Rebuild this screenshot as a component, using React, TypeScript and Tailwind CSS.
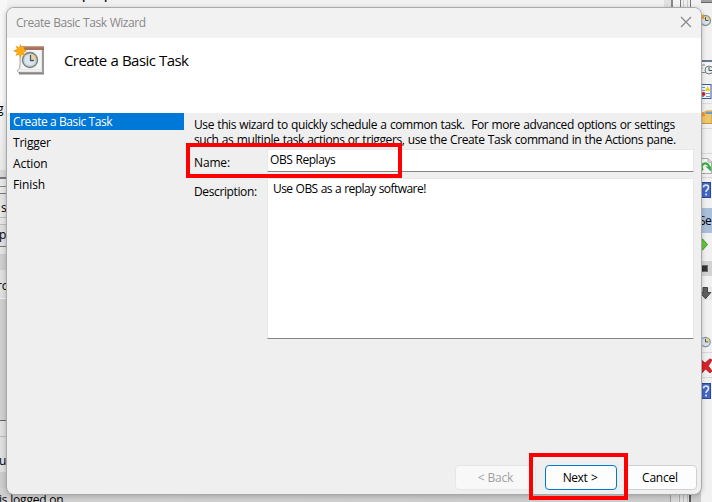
import type { ReactNode } from "react";

const UI = "font-['Open_Sans','Noto_Sans',sans-serif]";

function Slot({ h, children, className = "overflow-hidden" }: { h: number; children?: ReactNode; className?: string }) {
  return (
    <div className={`shrink-0 ${className}`} style={{ height: h }}>
      {children}
    </div>
  );
}

function Clock({ cx, cy, r }: { cx: number; cy: number; r: number }) {
  return (
    <g>
      <circle cx={cx} cy={cy} r={r} fill="#d5e4ee" stroke="#8c9499" strokeWidth="1.3" />
      <path d={`M${cx} ${cy}V${cy - r + 1}A${r - 1} ${r - 1} 0 0 1 ${cx + r - 1} ${cy}Z`} fill="#f2cf7c" />
      <path d={`M${cx} ${cy - r + 1.5}V${cy}H${cx + r - 2}`} fill="none" stroke="#4e5a66" strokeWidth="1" />
    </g>
  );
}

function Help() {
  return (
    <svg width="11" height="16" viewBox="0 0 11 16">
      <rect x="-4" y="0.5" width="13.5" height="15" fill="#4267c5" stroke="#2c4696" />
      <path d="M2.5 5.5Q2.5 3 5 3Q7.5 3 7.5 5.5Q7.5 7 6 8Q5 8.700 5 10M5 11.500V13.500" fill="none" stroke="#e6ecfb" strokeWidth="1.600" />
    </svg>
  );
}

function TaskIcon() {
  return (
    <svg width="32" height="32" viewBox="0 0 32 32">
      <path d="M6 27H31V30.500H6Z" fill="#858585" />
      <path d="M8 4H31V29H7Z" fill="#9a9a9a" />
      <path d="M7.500 4H29V27H4.500Q7 25 7 20Z" fill="#e6e6e6" />
      <path d="M9 6H28V25H8Z" fill="#f4f4f4" />
      <path d="M4.500 26.500H29V27.800H5.500Z" fill="#ffffff" />
      <path d="M8 2H31V6H8Z" fill="#a8705c" />
      <path d="M8 2H31V3.200H8Z" fill="#c79a84" />
      <path d="M4.200 26.800Q7 25 7 20V10M4.200 26.800L6 29" fill="none" stroke="#a4a4a4" strokeWidth=".9" />
      <circle cx="17" cy="16" r="7.400" fill="#dbe7ef" stroke="#7b8285" strokeWidth="1.600" />
      <path d="M17 16V10A6 6 0 0 1 23 16Z" fill="#f2d48d" />
      <circle cx="17" cy="16" r="6" fill="none" stroke="#b6c1c7" strokeWidth=".8" />
      <path d="M17.500 11V16.500H21" fill="none" stroke="#485c75" strokeWidth="1.300" />
      <path d="M7.500 0L8.800 3.500L12 1.500L10.900 5L14 7L10.900 8.500L12 12L8.800 10.500L7.500 14L6 10.500L2.500 12L4 8.500L0 7L4 5L2.500 1.500L6 3.500Z" fill="#e79b18" />
      <circle cx="7.500" cy="7" r="4.200" fill="#ffac14" />
    </svg>
  );
}

function LeftPane() {
  return (
    <div className="flex w-[7px] shrink-0 flex-col text-[12px] leading-[16px] tracking-[-0.2px] text-black">
      <Slot h={101} className="bg-[#f7f7f7]" />
      <Slot h={69} className="bg-linear-to-b from-[#f4f4f4] to-[#e8e8e8]"><span className="-ml-[3px]">g</span></Slot>
      <Slot h={7} className="bg-[#d7d7d7]" />
      <Slot h={2} className="bg-[#777]" />
      <Slot h={7} className="bg-[#e7e7e7]" />
      <Slot h={1} className="bg-[#858585]" />
      <Slot h={6} className="bg-[#e7e7e7]" />
      <Slot h={1} className="bg-[#777]" />
      <Slot h={6} className="bg-[#e2e2e2]" />
      <Slot h={17} className="bg-[#e5e5e5]"><span className="ml-px">s</span></Slot>
      <Slot h={1} className="bg-[#bdbdbd]" />
      <Slot h={6} className="bg-[#e5e5e5]" />
      <Slot h={1} className="bg-[#bdbdbd]" />
      <Slot h={2} className="bg-[#dedede]" />
      <Slot h={19} className="bg-[#dedede]"><span className="-ml-[1px]">pe</span></Slot>
      <Slot h={1} className="bg-[#777]" />
      <Slot h={7} className="bg-[#e3e3e3]" />
      <Slot h={16} className="bg-[#cecece]" />
      <Slot h={8} className="bg-[#dedede]" />
      <Slot h={20} className="bg-[#dedede]"><span className="-ml-[3px]">ro</span></Slot>
      <Slot h={1} className="bg-[#eeeeee]" />
      <Slot h={121} className="bg-[#cfcfcf]" />
      <Slot h={1} className="bg-[#666]" />
      <Slot h={15} className="bg-[#dedede]" />
      <Slot h={1} className="bg-[#b9b9b9]" />
      <Slot h={16} className="bg-[#dedede]" />
      <Slot h={19} className="bg-[#dedede]"><span className="-ml-px">u</span></Slot>
      <Slot h={16} className="bg-[#cbcbcb]" />
      <Slot h={14} className="relative whitespace-nowrap bg-[#d0d0d0] pt-[4px]"><span className="-ml-px">is logged on</span></Slot>
    </div>
  );
}

function ActionPane() {
  return (
    <div className="flex w-[11px] shrink-0 flex-col bg-[#f1f1f1]">
      <Slot h={3} className="border-b border-[#666] bg-[#a0a0a0]" />
      <Slot h={10} />
      <Slot h={15}>
        <svg width="11" height="15" viewBox="0 0 11 15">
          <Clock cx={4.5} cy={7.5} r={5} />
          <path d="M-2 1L1 2L3 1L2.500 4L4 6L1 6L-1 9Z" fill="#f6a01a" />
        </svg>
      </Slot>
      <Slot h={32} />
      <Slot h={15}>
        <svg width="11" height="15" viewBox="0 0 11 15">
          <path d="M0 0H11V13H0Z" fill="#f4f5f5" />
          <path d="M0 1H11" stroke="#67778e" strokeWidth="2" />
          <path d="M0 5H4M0 8H2M0 12.500H5" stroke="#8a8a8a" />
          <circle cx="8" cy="10" r="4" fill="#e9eee9" stroke="#777" />
          <path d="M8 7V10.500H11" fill="none" stroke="#456" />
        </svg>
      </Slot>
      <Slot h={9} />
      <Slot h={15}>
        <svg width="11" height="15" viewBox="0 0 11 15">
          <rect x="-2" y=".5" width="12" height="14" fill="#f2f6ff" stroke="#3f58a4" />
          <path d="M0 3.500H4M0 6.500H4M5 9.500H9M5 12.500H9M0 12.500H3" stroke="#6d9cc0" />
          <path d="M6.500 2L9.500 7H4Z" fill="#f2ce13" />
          <circle cx="2.500" cy="10" r="2" fill="#c52931" />
        </svg>
      </Slot>
      <Slot h={4} />
      <Slot h={1} className="bg-[#dddddd]" />
      <Slot h={6} />
      <Slot h={15}>
        <svg width="11" height="15" viewBox="0 0 11 15">
          <path d="M0 3H5V1H11V13.500H0Z" fill="#edc56b" stroke="#c69849" />
          <path d="M5 3H11" stroke="#6d9dc4" strokeWidth="2" />
          <path d="M-2 2L1 3L4 1L3 4L5 6L2 6L0 9Z" fill="#f49816" />
        </svg>
      </Slot>
      <Slot h={3} />
      <Slot h={1} className="bg-[#d8d8d8]" />
      <Slot h={24} />
      <Slot h={1} className="bg-[#d8d8d8]" />
      <Slot h={4} />
      <Slot h={16}>
        <svg width="11" height="16" viewBox="0 0 11 16">
          <path d="M-2 .5H7L10.500 4V15.500H-2" fill="#f7f7f7" stroke="#a8a8a8" />
          <path d="M7 .5V4H10.500" fill="none" stroke="#a8a8a8" />
          <path d="M2 12A3.700 3.700 0 1 1 8 9.500" fill="none" stroke="#33b03c" strokeWidth="2.200" />
          <path d="M4.500 8.500H10V13.500Z" fill="#33b03c" />
        </svg>
      </Slot>
      <Slot h={3} />
      <Slot h={1} className="bg-[#d8d8d8]" />
      <Slot h={4} />
      <Slot h={16}><Help /></Slot>
      <Slot h={10} />
      <Slot h={25} className="whitespace-nowrap bg-[#a9bfda] text-[12px] leading-[25px] tracking-[-0.5px]"><span className="-ml-[2px]">Se</span></Slot>
      <Slot h={4} />
      <Slot h={15}>
        <svg width="11" height="15" viewBox="0 0 11 15"><path d="M0 2L1.500 2L6.500 7.500L1.500 13L0 13Z" fill="#65c934" stroke="#329925" /></svg>
      </Slot>
      <Slot h={9} />
      <Slot h={15} className="bg-[#d3d3d3]">
        <svg width="11" height="15" viewBox="0 0 11 15"><rect x=".5" y="4.500" width="6" height="6" fill="#333" stroke="#686868" /></svg>
      </Slot>
      <Slot h={11} />
      <Slot h={13} className="bg-[#e8e8e8]">
        <svg width="11" height="13" viewBox="0 0 11 13"><path d="M2 .5H6.500V5.500H9.800L4.500 11.800L-.8 5.500H2Z" fill="#606060" stroke="#414141" /></svg>
      </Slot>
      <Slot h={36} />
      <Slot h={14}>
        <svg width="11" height="14" viewBox="0 0 11 14"><Clock cx={4.500} cy={6} r={4.700} /></svg>
      </Slot>
      <Slot h={2} />
      <Slot h={1} className="bg-[#d8d8d8]" />
      <Slot h={5} />
      <Slot h={16}>
        <svg width="11" height="16" viewBox="0 0 11 16"><path d="M0 1.500L4 5L9 .8L11 2L7.300 8L11 13L9 15L4.500 11L1 15L-2 13L1.300 8L-2 4Z" fill="#db2027" stroke="#a91e22" strokeWidth=".8" /></svg>
      </Slot>
      <Slot h={3} />
      <Slot h={1} className="bg-[#d8d8d8]" />
      <Slot h={5} />
      <Slot h={16}><Help /></Slot>
    </div>
  );
}

function Backdrop() {
  return (
    <div className="flex h-full w-full">
      <LeftPane />
      <div className="flex min-w-0 flex-1 flex-col justify-between">
        <div className="flex h-[30px] bg-[#f1f1f1]">
          <div className="h-[10px] w-[657px] text-[12px] font-semibold leading-[16px]">
            <div className="-mt-[13px] flex pl-[75px]"><span className="w-[22px]">p</span><span>p</span></div>
          </div>
          <div className="w-[7px] bg-[#e1e1e1]" />
          <div className="w-[2px] bg-[#888]" />
          <div className="w-[7px] bg-[#f4f4f4]" />
          <div className="flex w-[11px] justify-between border-x border-[#777] bg-[#eee] px-[2px]"><div className="w-px bg-[#ccc]" /><div className="w-px bg-[#ccc]" /></div>
        </div>
        <div className="flex h-[30px] items-end bg-[#cbcbcb]">
          <div className="h-[30px] w-[663px] bg-linear-to-r from-[#d0d0d0] to-[#cbcbcb]" />
          <div className="h-[30px] w-[8px] border-l border-[#999] bg-[#d5d5d5]" />
          <div className="flex h-[30px] w-[11px] justify-around bg-[#ddd]"><div className="w-px bg-[#aaa]" /><div className="w-px bg-[#bbb]" /><div className="w-px bg-[#bbb]" /></div>
          <div className="h-[30px] w-[2px] bg-[#555]" />
        </div>
      </div>
      <ActionPane />
    </div>
  );
}

function Wizard() {
  return (
    <section className="absolute left-[6px] top-[7px] flex h-[488px] w-[696px] flex-col overflow-hidden rounded-[8px] border border-[#a9a9a9] bg-[#efefef] shadow-[0_1px_5px_rgba(0,0,0,0.22)]">
      <header className="flex h-[30px] shrink-0 items-center justify-between bg-[#f2f2f2] pl-[9px] pr-[9px]">
        <span className="text-[12px] leading-[16px] tracking-[-0.46px] text-[#888] [word-spacing:0.5px]">Create Basic Task Wizard</span>
        <svg className="-mt-[2px]" width="12" height="12" viewBox="0 0 12 12"><path d="M1 1L11 11M11 1L1 11" stroke="#858585" strokeWidth="1.100" /></svg>
      </header>
      <div className="flex h-[75px] shrink-0 bg-white pl-[6px] pt-[6px]">
        <TaskIcon />
        <h1 className="ml-[19px] mt-[5px] text-[15px] font-normal leading-[22px] tracking-[-0.58px] [word-spacing:0.5px]">Create a Basic Task</h1>
      </div>
      <div className="flex h-[300px] shrink-0 pl-[3px]">
        <nav className="flex w-[174px] flex-col gap-[4px] text-[12px] leading-[17px] tracking-[-0.42px]">
          <div className="h-[17px] bg-[#0078d7] pl-[3px] text-white">Create a Basic Task</div>
          <div className="h-[17px] pl-[3px] tracking-[-0.2px]">Trigger</div>
          <div className="h-[17px] pl-[3px] tracking-[-0.1px]">Action</div>
          <div className="h-[17px] pl-[3px] tracking-[-0.1px]">Finish</div>
        </nav>
        <main className="ml-[10px] w-[500px] pt-[4px] text-[12px] leading-[15px] tracking-[-0.33px]">
          <p className="whitespace-pre tracking-[-0.41px] [word-spacing:0.6px]">{"Use this wizard to quickly schedule a common task.  For more advanced options or settings\nsuch as multiple task actions or triggers, use the Create Task command in the Actions pane."}</p>
          <div className="mt-[2px] flex h-[23px]">
            <label className="w-[73px] pt-[6px] tracking-[-0.15px]">Name:</label>
            <div className="w-[427px] border border-[#e8e8e8] border-b-[#858585] bg-white pl-[2px] pt-[2px] tracking-[-0.45px] [word-spacing:0.5px]">OBS Replays</div>
          </div>
          <div className="mt-[6px] flex h-[161px]">
            <label className="w-[73px] pt-[6px] tracking-[-0.38px]">Description:</label>
            <div className="w-[427px] border border-[#e8e8e8] border-b-[#858585] bg-white pl-[5px] pt-[2px] tracking-[-0.55px] [word-spacing:0.5px]">Use OBS as a replay software!</div>
          </div>
        </main>
      </div>
      <footer className="mt-auto flex h-[29px] shrink-0 justify-end pr-[4px] text-[12px] tracking-[-0.2px]">
        <button className="mr-[9px] h-[25px] w-[81px] rounded-[4px] border border-[#e6e6e6] bg-[#f8f8f8] text-[#a0a0a0]">&lt; Back</button>
        <button className="mr-[8px] h-[25px] w-[72px] rounded-[4px] border border-[#0078d4] bg-[#fdfdfd] pr-[2px] tracking-[-0.4px] [word-spacing:0.8px]">Next &gt;</button>
        <button className="h-[25px] w-[72px] rounded-[4px] border border-[#d0d0d0] bg-[#fdfdfd] pr-[2px]">Cancel</button>
      </footer>
    </section>
  );
}

export default function App() {
  return (
    <div className={`relative h-[502px] w-[712px] overflow-hidden bg-[#e5e5e5] text-black ${UI}`}>
      <Backdrop />
      <Wizard />
      <div className="absolute left-[186px] top-[143px] h-[35px] w-[216px] border-4 border-[#fe0000]" />
      <div className="absolute left-[529px] top-[453px] h-[47px] w-[99px] border-4 border-[#fe0000]" />
    </div>
  );
}
